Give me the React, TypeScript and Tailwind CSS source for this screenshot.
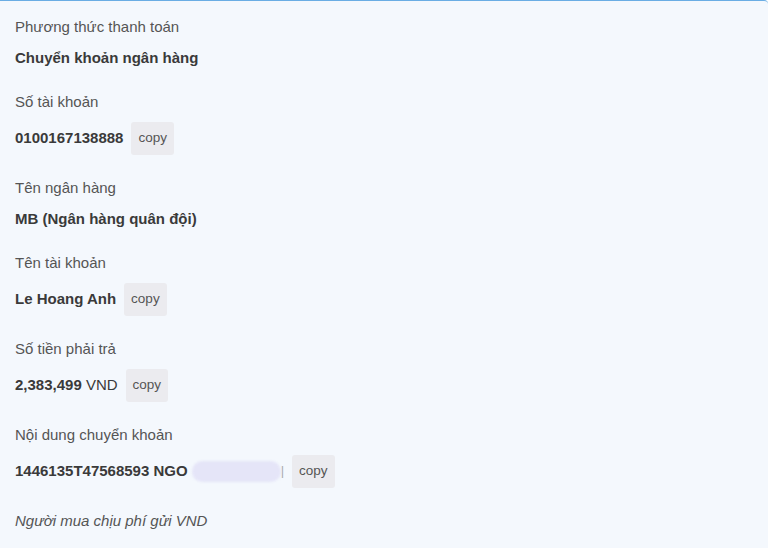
import React from "react";

type Row = {
  label: string;
  value: React.ReactNode;
  copy?: boolean;
};

function CopyButton() {
  return (
    <button className="h-[33px] px-[7px] rounded-[3px] bg-[#ebebef] text-[13.5px] text-[#555] leading-none">
      copy
    </button>
  );
}

export default function App() {
  const rows: Row[] = [
    { label: "Phương thức thanh toán", value: <b>Chuyển khoản ngân hàng</b> },
    { label: "Số tài khoản", value: <b>0100167138888</b>, copy: true },
    { label: "Tên ngân hàng", value: <b>MB (Ngân hàng quân đội)</b> },
    { label: "Tên tài khoản", value: <b>Le Hoang Anh</b>, copy: true },
    {
      label: "Số tiền phải trả",
      value: (
        <span>
          <b>2,383,499</b> VND
        </span>
      ),
      copy: true,
    },
    {
      label: "Nội dung chuyển khoản",
      value: (
        <span className="flex items-center">
          <b>1446135T47568593 NGO</b>
          <span className="ml-[4px] w-[89px] h-[21px] rounded-full bg-[#e5e5f8] blur-[1px]" />
          <span className="text-[13px] text-[#aaa]">|</span>
        </span>
      ),
      copy: true,
    },
  ];

  return (
    <div
      className="min-h-[548px] w-full bg-[#f4f8fd] border-t border-[#6aade4] rounded-tr-[4px] px-[15px] pt-[15px] text-[15px] text-[#444]"
      style={{ fontFamily: '"Liberation Sans", Arial, sans-serif' }}
    >
      {rows.map((r) => (
        <div key={r.label} className="mb-[22.5px]">
          <div className="leading-[22px] text-[#555]">{r.label}</div>
          <div className="mt-[8.5px] flex items-center gap-[8px] leading-[22px] text-[#3a3a3a]">
            <div>{r.value}</div>
            {r.copy && <CopyButton />}
          </div>
        </div>
      ))}
      <div className="leading-[22px] italic text-[#555]">Người mua chịu phí gửi VND</div>
    </div>
  );
}
